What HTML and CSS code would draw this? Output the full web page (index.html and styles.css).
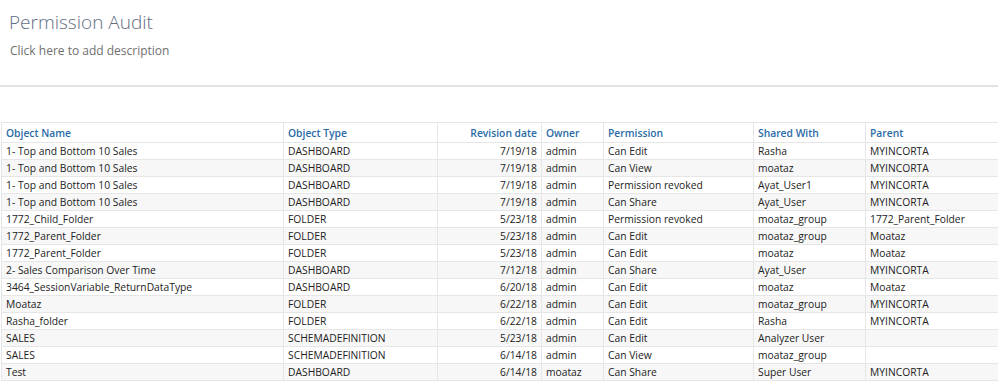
FILE: index.html
```html
<!DOCTYPE html>
<html>
<head>
<meta charset="utf-8">
<link rel="stylesheet" href="styles.css">
</head>
<body>
<div class="header">
  <h1 class="title">Permission Audit</h1>
  <div class="desc">Click here to add description</div>
</div>
<div class="divider"></div>
<div class="table-wrap">
<table class="grid">
  <colgroup>
    <col class="c1"><col class="c2"><col class="c3"><col class="c4"><col class="c5"><col class="c6"><col class="c7">
  </colgroup>
  <thead>
    <tr><th>Object Name</th><th>Object Type</th><th class="num">Revision date</th><th>Owner</th><th>Permission</th><th>Shared With</th><th>Parent</th></tr>
  </thead>
  <tbody>
    <tr><td>1- Top and Bottom 10 Sales</td><td>DASHBOARD</td><td class="num">7/19/18</td><td>admin</td><td>Can Edit</td><td>Rasha</td><td>MYINCORTA</td></tr>
    <tr><td>1- Top and Bottom 10 Sales</td><td>DASHBOARD</td><td class="num">7/19/18</td><td>admin</td><td>Can View</td><td>moataz</td><td>MYINCORTA</td></tr>
    <tr><td>1- Top and Bottom 10 Sales</td><td>DASHBOARD</td><td class="num">7/19/18</td><td>admin</td><td>Permission revoked</td><td>Ayat_User1</td><td>MYINCORTA</td></tr>
    <tr><td>1- Top and Bottom 10 Sales</td><td>DASHBOARD</td><td class="num">7/19/18</td><td>admin</td><td>Can Share</td><td>Ayat_User</td><td>MYINCORTA</td></tr>
    <tr><td>1772_Child_Folder</td><td>FOLDER</td><td class="num">5/23/18</td><td>admin</td><td>Permission revoked</td><td>moataz_group</td><td>1772_Parent_Folder</td></tr>
    <tr><td>1772_Parent_Folder</td><td>FOLDER</td><td class="num">5/23/18</td><td>admin</td><td>Can Edit</td><td>moataz_group</td><td>Moataz</td></tr>
    <tr><td>1772_Parent_Folder</td><td>FOLDER</td><td class="num">5/23/18</td><td>admin</td><td>Can Edit</td><td>moataz</td><td>Moataz</td></tr>
    <tr><td>2- Sales Comparison Over Time</td><td>DASHBOARD</td><td class="num">7/12/18</td><td>admin</td><td>Can Share</td><td>Ayat_User</td><td>MYINCORTA</td></tr>
    <tr><td>3464_SessionVariable_ReturnDataType</td><td>DASHBOARD</td><td class="num">6/20/18</td><td>admin</td><td>Can Edit</td><td>moataz</td><td>Moataz</td></tr>
    <tr><td>Moataz</td><td>FOLDER</td><td class="num">6/22/18</td><td>admin</td><td>Can Edit</td><td>moataz_group</td><td>MYINCORTA</td></tr>
    <tr><td>Rasha_folder</td><td>FOLDER</td><td class="num">6/22/18</td><td>admin</td><td>Can Edit</td><td>Rasha</td><td>MYINCORTA</td></tr>
    <tr><td>SALES</td><td>SCHEMADEFINITION</td><td class="num">5/23/18</td><td>admin</td><td>Can Edit</td><td>Analyzer User</td><td></td></tr>
    <tr><td>SALES</td><td>SCHEMADEFINITION</td><td class="num">6/14/18</td><td>admin</td><td>Can View</td><td>moataz_group</td><td></td></tr>
    <tr><td>Test</td><td>DASHBOARD</td><td class="num">6/14/18</td><td>moataz</td><td>Can Share</td><td>Super User</td><td>MYINCORTA</td></tr>
  </tbody>
</table>
</div>
</body>
</html>
```
FILE: styles.css
```css
html, body {
  margin: 0;
  padding: 0;
  background: #ffffff;
  font-family: "Open Sans", "Liberation Sans", sans-serif;
  overflow: hidden;
}
.header {
  padding: 9px 0 0 9px;
  height: 76px;
  box-sizing: border-box;
}
.title {
  margin: 0;
  font-size: 19px;
  font-weight: 300;
  line-height: 26px;
  color: #5f6e82;
}
.desc {
  margin: 7px 0 0 1px;
  font-size: 12px;
  line-height: 17px;
  color: #6f6f6f;
}
.divider {
  margin-top: 9px;
  height: 2px;
  background: #e3e3e3;
}
.table-wrap {
  padding: 35px 0 0 1px;
}
.grid {
  border-collapse: collapse;
  table-layout: fixed;
  width: 1010px;
  font-size: 10.3px;
  color: #222222;
}
.c1 { width: 282px; }
.c2 { width: 154px; }
.c3 { width: 104px; }
.c4 { width: 62px; }
.c5 { width: 150px; }
.c6 { width: 112px; }
.c7 { width: 146px; }
.grid th, .grid td {
  border: 1px solid #e6e6e6;
  padding: 0 4px;
  text-align: left;
  white-space: nowrap;
  overflow: hidden;
}
.grid th {
  height: 19px;
  font-weight: 600;
  color: #2a6aa6;
}
.grid td {
  height: 16px;
  line-height: 16px;
}
.grid tbody tr:nth-child(even) td {
  background: #f7f7f7;
}
.grid .num {
  text-align: right;
}
```
